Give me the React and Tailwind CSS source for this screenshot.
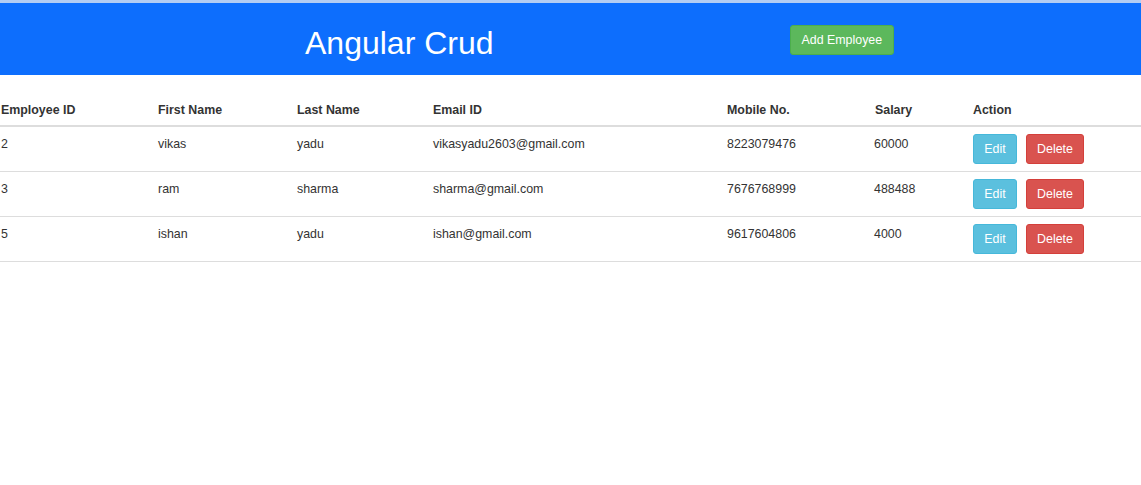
import React from 'react';

const employees = [
    { id: 2, first: 'vikas', last: 'yadu', email: 'vikasyadu2603@gmail.com', mobile: '8223079476', salary: '60000' },
    { id: 3, first: 'ram', last: 'sharma', email: 'sharma@gmail.com', mobile: '7676768999', salary: '488488' },
    { id: 5, first: 'ishan', last: 'yadu', email: 'ishan@gmail.com', mobile: '9617604806', salary: '4000' },
];

// widths of the columns, taken from the layout
const cols = 'grid grid-cols-[157px_140px_136px_294px_148px_98px_1fr]';

function App() {
    return (
        <div className="min-h-[485px] bg-white text-[#333] font-['Liberation_Sans',Arial,sans-serif]">
            <div className="h-[3px] bg-[#b3cdf3]" />
            <header className="h-[72px] bg-[#0d6efd] flex items-start">
                <h1 className="ml-[305px] mt-[22px] text-[32px] leading-[37px] text-white">Angular Crud</h1>
                <button className="ml-[296px] mt-[22px] h-[30px] px-[11px] rounded-[3px] bg-[#5cb85c] border border-[#4cae4c] text-white text-[12.4px]">
                    Add Employee
                </button>
            </header>

            <div className="mt-[23px] text-[12.4px]">
                <div className={`${cols} h-[29px] items-start font-bold border-b-2 border-[#ddd]`}>
                    <div className="pl-[1px] leading-[16px] pt-[4px]">Employee ID</div>
                    <div className="pl-[1px] leading-[16px] pt-[4px]">First Name</div>
                    <div className="leading-[16px] pt-[4px]">Last Name</div>
                    <div className="leading-[16px] pt-[4px]">Email ID</div>
                    <div className="leading-[16px] pt-[4px]">Mobile No.</div>
                    <div className="leading-[16px] pt-[4px]">Salary</div>
                    <div className="leading-[16px] pt-[4px]">Action</div>
                </div>
                {employees.map(emp => (
                    <div key={emp.id} className={`${cols} h-[45px] items-start border-b border-[#ddd]`}>
                        <div className="pl-[1px] pt-[9px] leading-[16px]">{emp.id}</div>
                        <div className="pl-[1px] pt-[9px] leading-[16px]">{emp.first}</div>
                        <div className="pt-[9px] leading-[16px]">{emp.last}</div>
                        <div className="pt-[9px] leading-[16px]">{emp.email}</div>
                        <div className="pt-[9px] leading-[16px]">{emp.mobile}</div>
                        <div className="-ml-[1px] pt-[9px] leading-[16px]">{emp.salary}</div>
                        <div className="pt-[7px] flex gap-[9px]">
                            <button className="w-[44px] h-[30px] rounded-[3px] bg-[#5bc0de] border border-[#46b8da] text-white">Edit</button>
                            <button className="w-[58px] h-[30px] rounded-[3px] bg-[#d9534f] border border-[#d43f3a] text-white">Delete</button>
                        </div>
                    </div>
                ))}
            </div>
        </div>
    );
}

export default App;
